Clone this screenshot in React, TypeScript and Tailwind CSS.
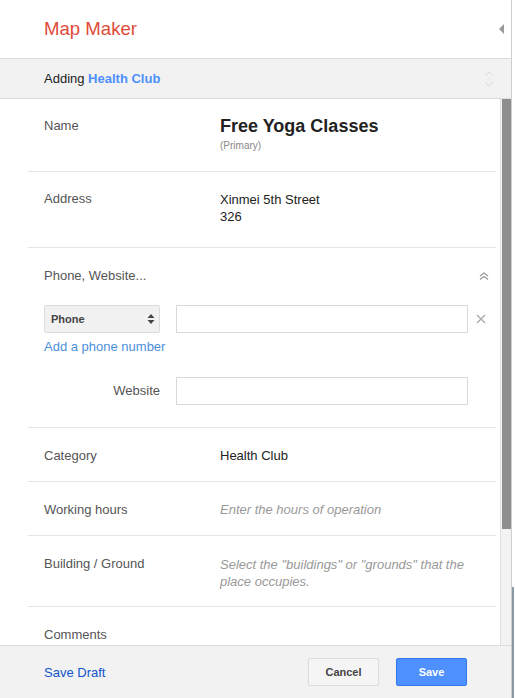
import React from "react";

const font = { fontFamily: '"Liberation Sans", Arial, sans-serif' };

function Row({ label, children, className = "" }: { label: string; children?: React.ReactNode; className?: string }) {
  return (
    <div className={`flex border-b border-[#e5e5e5] px-4 ${className}`}>
      <div className="w-[176px] shrink-0 text-[13px] leading-[16px] text-[#555]">{label}</div>
      <div className="flex-1">{children}</div>
    </div>
  );
}

export default function App() {
  return (
    <div className="flex h-[698px] w-[515px] overflow-hidden bg-white" style={font}>
      <div className="flex w-[512px] flex-col border-r border-[#cfcfcf]">
        {/* Header */}
        <div className="flex h-[59px] shrink-0 items-center justify-between border-b border-[#dcdcdc] pl-[44px] pr-[7px]">
          <div className="text-[18.6px] leading-[22px] text-[#dd4b39]">Map Maker</div>
          <svg width="5" height="10" viewBox="0 0 5 10" className="mb-[1px]">
            <path d="M5 0 L0 5 L5 10 Z" fill="#9a9a9a" />
          </svg>
        </div>
        {/* Subheader */}
        <div className="flex h-[40px] shrink-0 items-center justify-between border-b border-[#dcdcdc] bg-[#f2f2f2] pl-[44px] pr-[17px]">
          <div className="text-[13px] leading-[16px] text-[#222]">
            Adding <span className="font-bold text-[#4d90fe]">Health Club</span>
          </div>
          <svg width="10" height="16" viewBox="0 0 10 16">
            <path d="M1 5 L5 1 L9 5" fill="none" stroke="#d8d8d8" strokeWidth="1" />
            <path d="M1 11 L5 15 L9 11" fill="none" stroke="#d8d8d8" strokeWidth="1" />
            <path d="M2 8 H8" stroke="#e2e2e2" strokeWidth="1" strokeDasharray="1 1" />
          </svg>
        </div>
        {/* Scroll area */}
        <div className="flex min-h-0 flex-1">
          <div className="flex-1 overflow-hidden pl-[28px] pr-[4px]">
            <Row label="Name" className="pb-[19px] pt-[19px]">
              <div className="text-[18px] font-bold leading-[16px] text-[#222]">Free Yoga Classes</div>
              <div className="mt-[6px] text-[10px] leading-[12px] text-[#888]">(Primary)</div>
            </Row>
            <Row label="Address" className="pb-[22px] pt-[19px]">
              <div className="text-[13px] leading-[17px] text-[#222]">Xinmei 5th Street</div>
              <div className="text-[13px] leading-[17px] text-[#222]">326</div>
            </Row>
            {/* Phone section */}
            <div className="border-b border-[#e5e5e5] px-4 pb-[22px] pt-[20px]">
              <div className="mr-[-12px] flex items-center justify-between">
                <div className="text-[13px] leading-[16px] text-[#555]">Phone, Website...</div>
                <svg width="10" height="8" viewBox="0 0 10 8" className="mr-[3px]">
                  <path d="M1 4 L5 1 L9 4" fill="none" stroke="#999" strokeWidth="1.2" />
                  <path d="M1 7.5 L5 4.5 L9 7.5" fill="none" stroke="#999" strokeWidth="1.2" />
                </svg>
              </div>
              <div className="mr-[-16px] mt-[21px] flex items-center">
                <div className="flex h-[28px] w-[116px] shrink-0 items-center justify-between rounded-[2px] border border-[#dcdcdc] bg-[#f1f1f1] pl-[6px] pr-[4px]">
                  <span className="text-[11px] font-bold text-[#444]">Phone</span>
                  <svg width="8" height="12" viewBox="0 0 8 12">
                    <path d="M0.5 5 L4 1 L7.5 5 Z" fill="#444" />
                    <path d="M0.5 7 L4 11 L7.5 7 Z" fill="#444" />
                  </svg>
                </div>
                <div className="ml-[16px] h-[28px] w-[292px] shrink-0 border border-[#d9d9d9] bg-white" />
                <svg width="10" height="10" viewBox="0 0 10 10" className="ml-[8px] shrink-0">
                  <path d="M1 1 L9 9 M9 1 L1 9" stroke="#aaa" strokeWidth="1.4" />
                </svg>
              </div>
              <div className="mt-[6px] text-[13px] leading-[16px] text-[#4a8fdc]">Add a phone number</div>
              <div className="mt-[22px] flex items-center">
                <div className="w-[116px] shrink-0 text-right text-[13px] leading-[16px] text-[#555]">Website</div>
                <div className="ml-[16px] h-[28px] w-[292px] shrink-0 border border-[#d9d9d9] bg-white" />
              </div>
            </div>
            <Row label="Category" className="pb-[17px] pt-[20px]">
              <div className="text-[13px] leading-[16px] text-[#222]">Health Club</div>
            </Row>
            <Row label="Working hours" className="pb-[17px] pt-[20px]">
              <div className="text-[13px] italic leading-[16px] text-[#999]">Enter the hours of operation</div>
            </Row>
            <Row label="Building / Ground" className="pb-[16px] pt-[20px]">
              <div className="text-[13px] italic leading-[17px] text-[#999]">
                Select the "buildings" or "grounds" that the
                <br />
                place occupies.
              </div>
            </Row>
            <div className="px-4 pt-[20px]">
              <div className="text-[13px] leading-[16px] text-[#555]">Comments</div>
            </div>
          </div>
          {/* Scrollbar */}
          <div className="w-[11px] shrink-0 border-l border-[#e0e0e0] bg-[#f3f3f3] pl-[1px]">
            <div className="h-[430px] w-[9px] bg-[#8e8e8e]" />
          </div>
        </div>
        {/* Footer */}
        <div className="flex h-[53px] shrink-0 items-center border-t border-[#dcdcdc] bg-[#f2f2f2] pl-[44px] pr-[44px]">
          <div className="mt-[2px] text-[13px] leading-[16px] text-[#1155cc]">Save Draft</div>
          <div className="flex-1" />
          <div className="flex h-[28px] w-[71px] items-center justify-center rounded-[2px] border border-[#dcdcdc] bg-[#f5f5f5] text-[11px] font-bold text-[#444]">
            Cancel
          </div>
          <div className="ml-[17px] flex h-[28px] w-[71px] items-center justify-center rounded-[2px] border border-[#3079ed] bg-[#4d90fe] text-[11px] font-bold text-white">
            Save
          </div>
        </div>
      </div>
      <div className="flex w-[2px] flex-col">
        <div className="h-[587px] bg-white" />
        <div className="flex-1 bg-[#8a98a2]" />
      </div>
    </div>
  );
}
